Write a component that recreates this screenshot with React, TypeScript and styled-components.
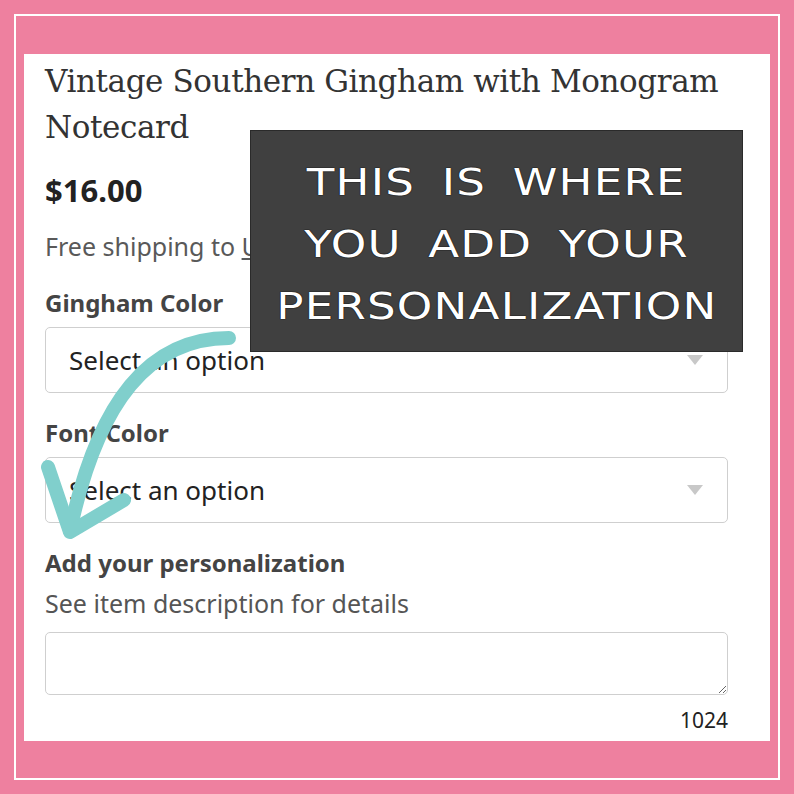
import styled, { createGlobalStyle } from "styled-components";

const GlobalStyle = createGlobalStyle`
  html, body {
    margin: 0;
    padding: 0;
    background: #ee809f;
  }
  * {
    box-sizing: border-box;
  }
`;

const Page = styled.div`
  width: 794px;
  height: 794px;
  padding: 14px;
  background: #ee809f;
`;

const Frame = styled.div`
  height: 100%;
  border: 2px solid #ffffff;
  padding: 38px 8px 37px 8px;
`;

const Panel = styled.div`
  position: relative;
  height: 100%;
  background: #ffffff;
  padding: 4px 42px 0 21px;
  font-family: "Noto Sans", sans-serif;
  color: #222222;
  overflow: hidden;
`;

const Title = styled.h1`
  margin: 0;
  font-family: "DejaVu Serif", serif;
  font-weight: normal;
  font-size: 31px;
  line-height: 46px;
  color: #333333;
  letter-spacing: -0.4px;
`;

const Price = styled.div`
  margin-top: 22px;
  font-size: 31px;
  font-weight: 700;
  line-height: 36px;
  color: #222222;
`;

const Shipping = styled.div`
  margin-top: 24px;
  font-size: 25px;
  line-height: 28px;
  color: #595959;

  span {
    text-decoration: underline;
  }
`;

const Label = styled.div<{ gap: number }>`
  margin-top: ${(p) => p.gap}px;
  font-size: 24px;
  font-weight: 700;
  line-height: 28px;
  color: #444444;
`;

const Hint = styled.div`
  margin-top: 12px;
  font-size: 25px;
  line-height: 28px;
  color: #555555;
`;

const Select = styled.div`
  margin-top: 10px;
  height: 66px;
  border: 1.5px solid #cfcfcf;
  border-radius: 5px;
  display: flex;
  align-items: center;
  justify-content: space-between;
  padding: 0 24px 0 23px;
  font-size: 26px;
  color: #222222;
`;

const Caret = styled.span`
  width: 0;
  height: 0;
  border-left: 8px solid transparent;
  border-right: 8px solid transparent;
  border-top: 10px solid #c8c8c8;
`;

const TextArea = styled.textarea`
  display: block;
  width: 100%;
  margin-top: 15px;
  height: 63px;
  border: 1.5px solid #cfcfcf;
  border-radius: 5px;
  resize: vertical;
  font-family: inherit;
  font-size: 20px;
  outline: none;
`;

const Counter = styled.div`
  margin-top: 13px;
  text-align: right;
  font-size: 21px;
  line-height: 24px;
  color: #222222;
`;

const Callout = styled.div`
  position: absolute;
  left: 226px;
  top: 76px;
  width: 493px;
  height: 222px;
  padding-top: 8px;
  background: #404040;
  border: 1px solid #2a2a2a;
  display: flex;
  flex-direction: column;
  justify-content: center;
  align-items: center;
  gap: 4px;
`;

const CalloutLine = styled.div`
  font-family: "DejaVu Sans", sans-serif;
  font-size: 37px;
  line-height: 58px;
  letter-spacing: 1px;
  word-spacing: 9px;
  color: #ffffff;
  text-shadow: 0 0 1px #000000, 0 0 1px #000000;
  white-space: nowrap;
  transform: scaleX(1.22);
`;

const ArrowLayer = styled.svg`
  position: absolute;
  left: -24px;
  top: -54px;
  width: 794px;
  height: 794px;
  pointer-events: none;
`;

function Arrow() {
  return (
    <ArrowLayer viewBox="0 0 794 794">
      <g
        fill="none"
        stroke="#80cfcc"
        strokeWidth="14"
        strokeLinecap="round"
        strokeLinejoin="round"
      >
        <path d="M 229 338 C 150 338 98 400 70 531" />
        <path d="M 48 467 L 70 532 L 124 500" />
      </g>
    </ArrowLayer>
  );
}

export default function App() {
  return (
    <Page>
      <GlobalStyle />
      <Frame>
        <Panel>
          <Title>
            Vintage Southern Gingham with Monogram
            <br />
            Notecard
          </Title>
          <Price>$16.00</Price>
          <Shipping>
            Free shipping to <span>United States</span>
          </Shipping>
          <Label gap={29}>Gingham Color</Label>
          <Select>
            Select an option
            <Caret />
          </Select>
          <Label gap={26}>Font Color</Label>
          <Select>
            Select an option
            <Caret />
          </Select>
          <Label gap={26}>Add your personalization</Label>
          <Hint>See item description for details</Hint>
          <TextArea />
          <Counter>1024</Counter>
          <Arrow />
          <Callout>
            <CalloutLine>THIS IS WHERE</CalloutLine>
            <CalloutLine>YOU ADD YOUR</CalloutLine>
            <CalloutLine>PERSONALIZATION</CalloutLine>
          </Callout>
        </Panel>
      </Frame>
    </Page>
  );
}
